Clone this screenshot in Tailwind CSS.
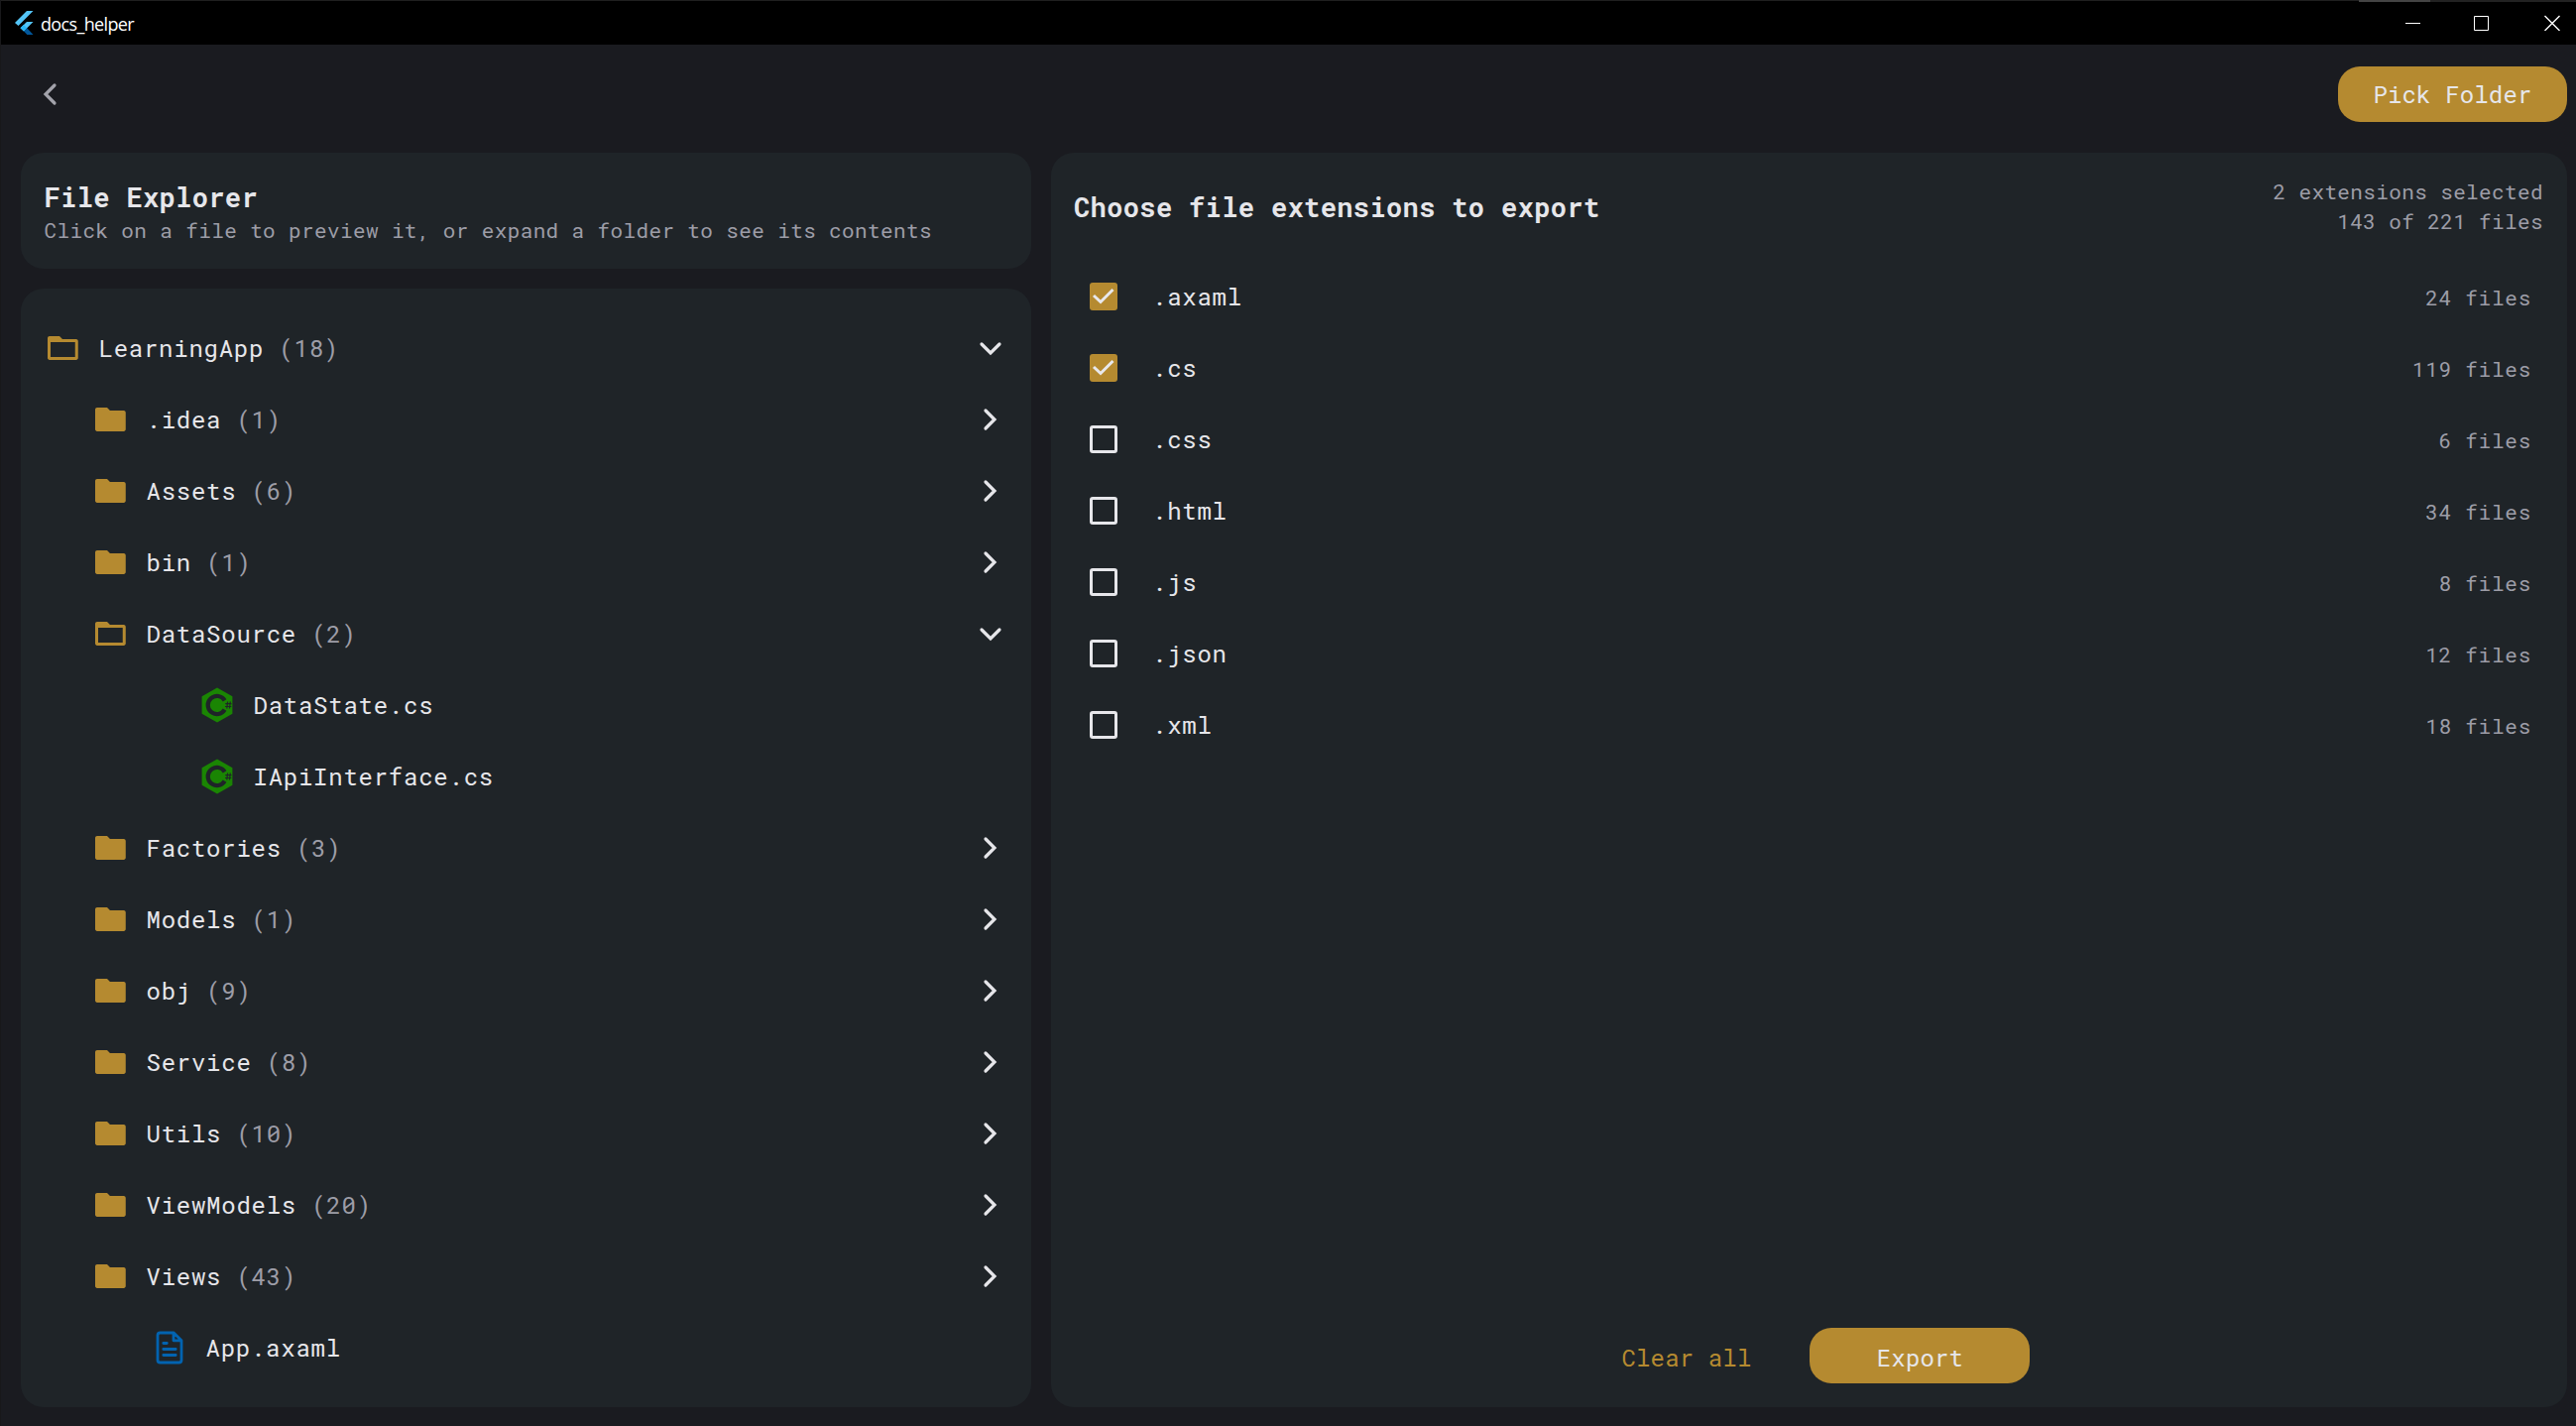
<!DOCTYPE html>
<html lang="en">
<head>
<meta charset="utf-8">
<title>docs_helper</title>
<script src="https://cdn.jsdelivr.net/npm/@tailwindcss/browser@4"></script>
</head>
<body class="w-[2598px] h-[1438px] overflow-hidden bg-[#1a1b20] text-[#e6e6ea] font-['Roboto_Mono','Liberation_Mono',monospace]">
<svg class="hidden">
  <symbol id="folder" viewBox="0 0 24 24"><path fill="#b58a30" d="M10 4H3.300C2.600 4 2 4.600 2 5.300V18.700C2 19.400 2.600 20 3.300 20H21.200C21.900 20 22.500 19.400 22.500 18.700V7.300C22.500 6.600 21.900 6 21.200 6H12Z"/></symbol>
  <symbol id="open" viewBox="0 0 24 24"><path fill="#b58a30" fill-rule="evenodd" d="M10 4H3.300C2.600 4 2 4.600 2 5.300V18.700C2 19.400 2.600 20 3.300 20H21.200C21.900 20 22.500 19.400 22.500 18.700V7.300C22.500 6.600 21.900 6 21.200 6H12ZM4 8V18H20.500V8Z"/></symbol>
  <symbol id="right" viewBox="0 0 36 36"><path d="M13 9L22 18L13 27" fill="none" stroke="currentColor" stroke-width="3.200" stroke-linecap="round" stroke-linejoin="miter"/></symbol>
  <symbol id="down" viewBox="0 0 36 36"><path d="M9 14L18 23L27 14" fill="none" stroke="currentColor" stroke-width="3.200" stroke-linecap="round" stroke-linejoin="miter"/></symbol>
  <symbol id="cs" viewBox="0 0 36 36"><path fill="#1a8503" d="M18 0.500L33.400 9.200V26.800L18 35.500L2.600 26.800V9.200Z"/><path d="M27.400 12.300A11.200 11.200 0 1 0 27.400 23.700L23.800 21.600A7 7 0 1 1 23.800 14.400Z" fill="#1f2428"/><path d="M28.600 14.500L27.800 21.500M31.300 14.500L30.500 21.500M26.300 16.700H32.500M26 19.500H32.300" stroke="#1f2428" stroke-width="1.200" fill="none"/></symbol>
  <symbol id="doc" viewBox="0 0 36 36"><path d="M22.200 3H8.500C7 3 6 4 6 5.500V30.500C6 32 7 33 8.500 33H27.500C29 33 30 32 30 30.500V10.800ZM22 3V10.800H30M11.800 13.500H15.300M11.800 19.500H24.200M11.800 25.500H24.200" fill="none" stroke="#0263b0" stroke-width="2.800" stroke-linecap="round" stroke-linejoin="round"/></symbol>
  <symbol id="on" viewBox="0 0 28 28"><rect width="28" height="28" rx="3" fill="#b58a30"/><path d="M4 13L11 19.500L23.500 7" fill="none" stroke="#e8e8ec" stroke-width="3"/></symbol>
  <symbol id="off" viewBox="0 0 28 28"><rect x="1.500" y="1.500" width="25" height="25" rx="1.500" fill="none" stroke="#e6e6ea" stroke-width="3"/></symbol>
</svg>
<div class="flex flex-col w-full h-full border-l border-[#18181a]">
  <header class="relative h-[45px] bg-black border-t border-[#1f1f1f] flex items-center shrink-0 text-white">
    <div class="absolute right-[147px] -top-px w-[72px] h-[2px] bg-[#444]"></div>
    <div class="absolute right-0 -top-px w-[147px] h-[2px] bg-[#222]"></div>
    <svg class="w-[19px] h-[24px] ml-[14px]" viewBox="0 0 19 24"><path fill="#54c5f8" d="M12 0H18.500L3.500 15L0 12Z"/><path fill="#54c5f8" d="M12 11H18.500L9 20.500L5.500 17.300Z"/><path fill="#01579b" d="M9 20.500L12.200 17.300L18.500 24H12.300Z"/><path fill="#29b6f6" d="M5.500 17.300L8.800 14L12.200 17.300L9 20.500Z"/></svg>
    <span class="ml-[7px] pt-px text-[18px] tracking-[-0.650px] leading-6 font-['Open_Sans',sans-serif]">docs_helper</span>
    <svg class="ml-auto mr-[16px] w-[156px] h-4" viewBox="0 0 156 16" fill="none" stroke="#fff"><path d="M0 8.500H15M69.500 1.500H83.500V15.500H69.500Z"/><path stroke-width="1.400" d="M140.500 1L155.500 16M155.500 1L140.500 16"/></svg>
  </header>
  <div class="h-[109px] shrink-0 flex items-center justify-between pl-[31px] pr-[9px] pb-[10px]">
    <svg class="size-9 -scale-x-100 text-[#a3a3ab]"><use href="#right"/></svg>
    <div class="w-[231px] h-[56px] rounded-[22px] bg-[#b58a30] flex items-center justify-center text-[24px] tracking-[0.150px] pt-px">Pick Folder</div>
  </div>
  <main class="flex gap-5 pl-[19.500px] pr-[9px] h-[1265px]">
    <div class="w-[1019.500px] flex flex-col gap-5 shrink-0">
      <section class="h-[117px] rounded-[23px] bg-[#1f2428] px-[24px] pt-[29px]">
        <h1 class="text-[27px] font-bold tracking-[0.375px] leading-[32px]">File Explorer</h1>
        <p class="text-[21px] tracking-[0.375px] leading-[34px] text-[#9d9da7]">Click on a file to preview it, or expand a folder to see its contents</p>
      </section>
      <section id="tree" class="flex-1 rounded-[23px] bg-[#1f2428] py-6 pl-[24.500px] pr-[23.500px]"></section>
    </div>
    <section class="flex-1 rounded-[23px] bg-[#1f2428] flex flex-col">
      <div class="h-[109px] pl-[23px] pr-[24px] flex items-center justify-between">
        <h2 class="text-[27px] font-bold tracking-[0.375px] pt-[2px]">Choose file extensions to export</h2>
        <p class="text-[21px] tracking-[0.375px] leading-[30px] text-right text-[#9d9da7] pb-[2px]">2 extensions selected<br>143 of 221 files</p>
      </div>
      <div id="exts"></div>
      <div class="mt-auto mb-[24px] h-[56px] flex items-center justify-center gap-[59px] pl-[34px]">
        <span class="text-[24px] tracking-[0.150px] text-[#b58a30] pt-[3px]">Clear all</span>
        <div class="w-[222px] h-[56px] rounded-[22px] bg-[#b58a30] flex items-center justify-center text-[24px] tracking-[0.150px] pt-[3px]">Export</div>
      </div>
    </section>
  </main>
</div>
<script>
const tree = [
  ['LearningApp',18,'open','pl-0'],['.idea',1,'folder','pl-[48px]'],['Assets',6,'folder','pl-[48px]'],['bin',1,'folder','pl-[48px]'],
  ['DataSource',2,'open','pl-[48px]'],['DataState.cs',0,'cs','pl-[156px]'],['IApiInterface.cs',0,'cs','pl-[156px]'],
  ['Factories',3,'folder','pl-[48px]'],['Models',1,'folder','pl-[48px]'],['obj',9,'folder','pl-[48px]'],['Service',8,'folder','pl-[48px]'],
  ['Utils',10,'folder','pl-[48px]'],['ViewModels',20,'folder','pl-[48px]'],['Views',43,'folder','pl-[48px]'],['App.axaml',0,'doc','pl-[108px]']];
document.getElementById('tree').innerHTML = tree.map(([n,c,i,p]) => `<div class="h-[72px] flex items-center ${p}">
  <svg class="size-9 shrink-0"><use href="#${i}"/></svg>
  <span class="ml-[18.500px] text-[24px] tracking-[0.750px] whitespace-pre">${n}${c ? ` <span class="text-[#9d9da7]">(${c})</span>` : ''}</span>
  ${c ? `<svg class="ml-auto size-9"><use href="#${i === 'open' ? 'down' : 'right'}"/></svg>` : ''}</div>`).join('');
const exts = [['.axaml',24,1],['.cs',119,1],['.css',6,0],['.html',34,0],['.js',8,0],['.json',12,0],['.xml',18,0]];
document.getElementById('exts').innerHTML = exts.map(([n,c,on]) => `<div class="h-[72px] flex items-center pl-[39px] pr-[36px]">
  <svg class="size-7"><use href="#${on ? 'on' : 'off'}"/></svg>
  <span class="ml-[35px] text-[24px] tracking-[0.750px]">${n}</span>
  <span class="ml-auto pt-[3px] text-[21px] tracking-[0.750px] text-[#9d9da7]">${c} files</span></div>`).join('');
</script>
</body>
</html>
